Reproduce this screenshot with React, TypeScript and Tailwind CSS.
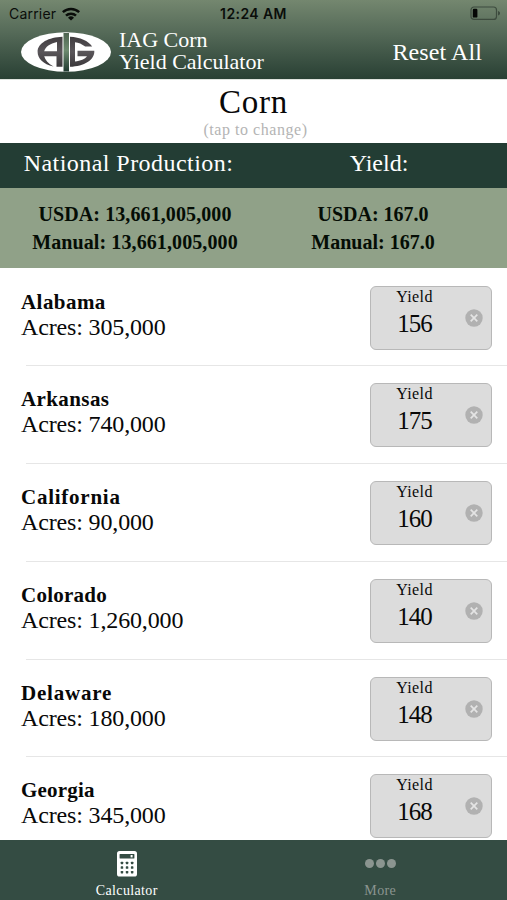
import React from "react";

type Entry = { name: string; acres: string; value: string; tracking: string };

const entries: Entry[] = [
  { name: "Alabama", acres: "305,000", value: "156", tracking: "tracking-[0.450px]" },
  { name: "Arkansas", acres: "740,000", value: "175", tracking: "tracking-[0.400px]" },
  { name: "California", acres: "90,000", value: "160", tracking: "tracking-[0.750px]" },
  { name: "Colorado", acres: "1,260,000", value: "140", tracking: "tracking-[0.250px]" },
  { name: "Delaware", acres: "180,000", value: "148", tracking: "tracking-[0.800px]" },
  { name: "Georgia", acres: "345,000", value: "168", tracking: "tracking-[0.200px]" },
];

function WifiIcon() {
  return (
    <svg viewBox="0 0 18 14" className="ml-[6px] h-[14px] w-[18px]">
      <g fill="none" stroke="#0a0d0a" strokeWidth="2.5">
        <path d="M.8 5.2a11.8 11.8 0 0 1 16.4 0" />
        <path d="M4 8.7a7.2 7.2 0 0 1 10 0" />
      </g>
      <path d="M9 13.6 6 10.7a4.3 4.3 0 0 1 6 0z" fill="#0a0d0a" />
    </svg>
  );
}

function BatteryIcon() {
  return (
    <svg viewBox="0 0 31 15" className="h-[15px] w-[31px]">
      <rect x="1" y="1" width="25.5" height="12.4" rx="3" fill="none" stroke="#3d4b3e" strokeWidth="1.2" />
      <rect x="2.8" y="2.8" width="4.6" height="8.8" rx="1.2" fill="#050705" />
      <path d="M28 5v4.5c1.6-.6 2-1.3 2-2.25S29.6 5.6 28 5z" fill="#3d4b3e" />
    </svg>
  );
}

function Logo() {
  return (
    <svg viewBox="0 0 90 40" className="h-[40px] w-[90px]">
      <defs>
        <linearGradient id="bar" x1="0" y1="0" x2="0" y2="1">
          <stop offset="0" stopColor="#4d6350" />
          <stop offset=".45" stopColor="#6e8b70" />
          <stop offset="1" stopColor="#203a30" />
        </linearGradient>
        <linearGradient id="steel" x1="0" y1="0" x2="0" y2="1">
          <stop offset="0" stopColor="#403c3f" />
          <stop offset=".5" stopColor="#5a565a" />
          <stop offset="1" stopColor="#3b383b" />
        </linearGradient>
      </defs>
      <ellipse cx="45" cy="20" rx="45" ry="19.7" fill="#fff" />
      <path
        fill="url(#steel)"
        fillRule="evenodd"
        d="M41.5 4.800V34.800H35.500V24.300H23.200C24.200 28.200 27.200 31.500 32.500 34.500C22 32.300 16.600 26.500 16.600 19.800C16.600 11 28 5.200 41.500 4.800ZM36 10C29 11.500 24.300 14.800 23.200 19.300H36Z"
      />
      <path
        fill="url(#steel)"
        d="M49 4.800C59 5.200 67.500 9 71.200 14.600H64.200C61 12 57.500 10.500 54 10.200V29.500C59.500 29 64 27 66 24.300H56.500V18.800H73.300C74 27.800 63 34.600 49 34.800Z"
      />
      <rect x="42.500" y="1" width="5.500" height="38.500" fill="url(#bar)" />
    </svg>
  );
}

function CalculatorIcon() {
  const dots = [10.7, 15.3, 19.9];
  return (
    <svg viewBox="0 0 20 26" className="h-[26px] w-[20px]">
      <rect width="20" height="25.5" rx="2.6" fill="#fff" />
      <rect x="2.6" y="3" width="14.8" height="4.4" rx=".5" fill="#344c43" />
      <rect x="13.6" y="4" width="2" height="2.4" fill="#fff" />
      {dots.map((y) =>
        [3.7, 8.8, 13.9].map((x) => (
          <rect key={`${x}-${y}`} x={x} y={y} width="2.5" height="2.5" rx=".6" fill="#344c43" />
        )),
      )}
    </svg>
  );
}

function ClearIcon() {
  return (
    <svg viewBox="0 0 18 18" className="h-[18px] w-[18px]">
      <circle cx="9" cy="9" r="8.7" fill="#b1b1b1" />
      <path d="m5.7 5.700 6.600 6.600m0-6.600-6.600 6.600" stroke="#e4e4e4" strokeWidth="1.7" />
    </svg>
  );
}

function StateRow({ entry }: { entry: Entry }) {
  return (
    <li className="flex h-[97.75px] shrink-0 flex-col">
      <div className="flex flex-1 justify-between pl-[21px] pr-[15px] pt-[17px]">
        <div className="pt-[4px]">
          <div className={`text-[21px] font-bold leading-[25px] ${entry.tracking}`}>{entry.name}</div>
          <div className="text-[24px] leading-[25px] tracking-[-0.15px]">Acres: {entry.acres}</div>
        </div>
        <div className="flex h-[64px] w-[122px] rounded-[6px] border-[1.5px] border-[#b8b8b8] bg-[#dcdcdc]">
          <div className="w-[87px] text-center">
            <div className="text-[16px] leading-[20px] tracking-[0.4px]">Yield</div>
            <div className="text-[25px] leading-[33px] tracking-[-1px]">{entry.value}</div>
          </div>
          <div className="flex items-center pl-[7px]">
            <ClearIcon />
          </div>
        </div>
      </div>
      <div className="ml-[26px] h-px bg-[#e6e6e6]" />
    </li>
  );
}

export default function App() {
  return (
    <div className="flex h-[900px] w-[507px] flex-col overflow-hidden bg-white font-['Liberation_Serif',serif] text-[#080808]">
      <header className="flex h-[79px] shrink-0 flex-col bg-linear-to-b from-[#74876f] via-[#566b59] via-40% to-[#294034] text-white">
        <div className="grid h-[27px] grid-cols-3 items-center pl-[9px] pr-[6px] font-['Inter',sans-serif] text-[14px] text-[#0a0d0a]">
          <div className="flex items-center tracking-[0.2px]">
            Carrier
            <WifiIcon />
          </div>
          <div className="pr-[3px] text-center text-[14px] font-semibold tracking-[0.4px]">12:24 AM</div>
          <div className="flex justify-end">
            <BatteryIcon />
          </div>
        </div>
        <div className="flex flex-1 items-center pb-[2px] pl-[21px] pr-[25px]">
          <Logo />
          <div className="ml-[8px] pb-[3px] text-[22px] leading-[22px]">
            <div>IAG Corn</div>
            <div>Yield Calculator</div>
          </div>
          <div className="ml-auto text-[24px] tracking-[0.1px]">Reset All</div>
        </div>
      </header>

      <section className="flex h-[63.5px] shrink-0 flex-col items-center border-t border-[#dfe3df] pt-[5px]">
        <h1 className="text-[33px] leading-[35px] tracking-[0.7px]">Corn</h1>
        <p className="pl-[4px] text-[16px] leading-[20px] tracking-[0.55px] text-[#b4b4b4]">(tap to change)</p>
      </section>

      <section className="flex h-[45.5px] shrink-0 bg-[#233d34] text-[24px] leading-[40px] text-white">
        <div className="w-[257px] text-center tracking-[0.45px]">National Production:</div>
        <div className="flex-1 pr-[6px] text-center">Yield:</div>
      </section>

      <section className="flex h-[80px] shrink-0 bg-[#90a188] pt-[12px] text-[20px] font-bold leading-[28px] text-[#050d05]">
        <div className="w-[270px] text-center tracking-[0.1px]">
          <div>USDA: 13,661,005,000</div>
          <div>Manual: 13,661,005,000</div>
        </div>
        <div className="flex-1 pr-[31px] text-center">
          <div>USDA: 167.0</div>
          <div>Manual: 167.0</div>
        </div>
      </section>

      <ul className="flex h-[572px] shrink-0 flex-col overflow-hidden pt-[0.5px]">
        {entries.map((entry) => (
          <StateRow key={entry.name} entry={entry} />
        ))}
      </ul>

      <nav className="grid h-[60px] shrink-0 grid-cols-2 bg-[#344c43] text-[14px] leading-[16px]">
        <div className="flex flex-col items-center pt-[11px] text-white">
          <CalculatorIcon />
          <span className="mt-[6px] tracking-[0.35px]">Calculator</span>
        </div>
        <div className="flex flex-col items-center pt-[11px] text-[#8b9590]">
          <div className="flex h-[25px] items-center gap-[2.5px]">
            <span className="h-[8.5px] w-[8.5px] rounded-full bg-[#8b9590]" />
            <span className="h-[8.5px] w-[8.5px] rounded-full bg-[#8b9590]" />
            <span className="h-[8.5px] w-[8.5px] rounded-full bg-[#8b9590]" />
          </div>
          <span className="mt-[7px] tracking-[0.4px]">More</span>
        </div>
      </nav>
    </div>
  );
}
